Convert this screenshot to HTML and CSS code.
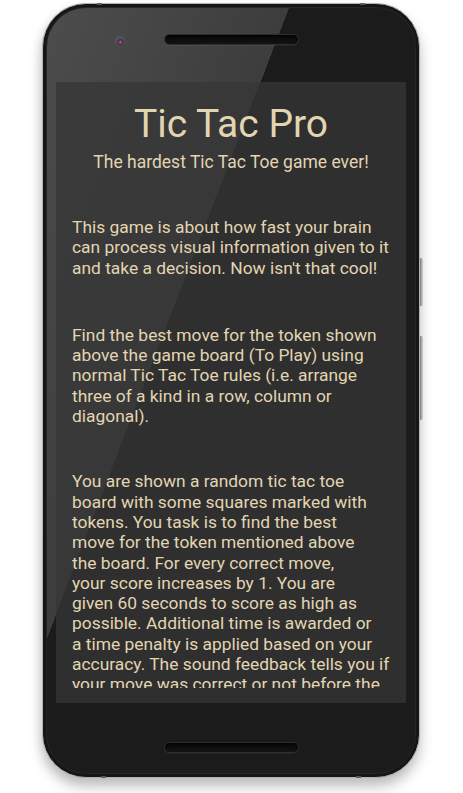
FILE: index.html
```html
<!DOCTYPE html>
<html lang="en">
<head>
<meta charset="utf-8">
<title>Tic Tac Pro</title>
<link rel="stylesheet" href="styles.css">
</head>
<body>
<div class="phone">
  <span class="btn btn-power"></span>
  <span class="btn btn-volume"></span>
  <span class="notch notch-tl"></span>
  <span class="notch notch-tr"></span>
  <span class="notch notch-bl"></span>
  <span class="notch notch-br"></span>
  <div class="bezel-top">
    <span class="camera"></span>
    <span class="speaker"></span>
    <span></span>
  </div>
  <div class="screen">
    <div class="content">
      <h1 class="title">Tic Tac Pro</h1>
      <p class="subtitle">The hardest Tic Tac Toe game ever!</p>
      <p class="para p1">This game is about how fast your brain<br>can process visual information given to it<br>and take a decision. Now isn't that cool!</p>
      <p class="para p2">Find the best move for the token shown<br>above the game board (To Play) using<br>normal Tic Tac Toe rules (i.e. arrange<br>three of a kind in a row, column or<br>diagonal).</p>
      <p class="para p3">You are shown a random tic tac toe<br>board with some squares marked with<br>tokens. You task is to find the best<br>move for the token mentioned above<br>the board. For every correct move,<br>your score increases by 1. You are<br>given 60 seconds to score as high as<br>possible. Additional time is awarded or<br>a time penalty is applied based on your<br>accuracy. The sound feedback tells you if<br>your move was correct or not before the<br>next board is shown.</p>
    </div>
  </div>
  <div class="bezel-bottom">
    <span class="speaker"></span>
  </div>
</div>
</body>
</html>
```
FILE: styles.css
```css
html, body {
  margin: 0;
  padding: 0;
  background: #ffffff;
}

body {
  width: 463px;
  height: 793px;
  overflow: hidden;
  padding-top: 3px;
  box-sizing: border-box;
  font-family: Roboto, "Noto Sans", Arial, sans-serif;
}

.phone {
  position: relative;
  box-sizing: border-box;
  width: 378px;
  height: 775px;
  margin-left: 42px;
  border: 1px solid #b4b4b4;
  border-radius: 44px;
  background:
    linear-gradient(111deg, rgba(255,255,255,0.22) 0%, rgba(255,255,255,0.15) 36.8%, rgba(255,255,255,0) 36.8%),
    #1b1b1b;
  box-shadow:
    inset 0 0 0 3px #161616,
    inset 0 0 0 4px #262626,
    0 9px 14px rgba(0,0,0,0.22),
    -2px 4px 10px rgba(0,0,0,0.08);
  display: flex;
  flex-direction: column;
}

.btn {
  position: absolute;
  right: -4px;
  width: 3px;
  background: linear-gradient(90deg, #7a7a7a, #d6d6d6);
  border-radius: 0 2px 2px 0;
}
.btn-power { top: 254px; height: 48px; }
.btn-volume { top: 332px; height: 84px; }

.notch {
  position: absolute;
  width: 5px;
  height: 2px;
  background: #5a5a5a;
}
.notch-tl { top: -1px; left: 54px; }
.notch-tr { top: -1px; right: 54px; }
.notch-bl { bottom: -1px; left: 58px; }
.notch-br { bottom: -1px; right: 58px; }

.bezel-top {
  box-sizing: border-box;
  height: 78px;
  padding-top: 30px;
  display: grid;
  grid-template-columns: 1fr auto 1fr;
  align-items: start;
}

.camera {
  justify-self: end;
  margin-right: 39px;
  margin-top: 2px;
  width: 10px;
  height: 10px;
  border-radius: 50%;
  background: radial-gradient(circle at 55% 62%, #d2506e 0, #a04060 1px, #38364a 2.5px, #4e4c60 4px, #56565e 5px);
}

.speaker {
  display: block;
  box-sizing: border-box;
  width: 135px;
  height: 11px;
  border-radius: 6px;
  border: 1px solid #2e2e2e;
  background: linear-gradient(#060606, #141414);
  box-shadow: inset 0 1px 2px rgba(0,0,0,0.9), 0 1px 0 rgba(255,255,255,0.05);
}

.screen {
  box-sizing: border-box;
  height: 621px;
  margin: 0 13px;
  padding: 20px 16px 15px 16px;
  background:
    linear-gradient(111deg, rgba(255,255,255,0.055) 0%, rgba(255,255,255,0.045) 34.7%, rgba(255,255,255,0) 34.7%),
    #2f2f2f;
  display: flex;
  flex-direction: column;
}

.content {
  flex: 1;
  overflow: hidden;
  color: #e2d5b2;
}

.title {
  margin: 0;
  font-size: 39px;
  line-height: 45px;
  font-weight: 400;
  text-align: center;
}

.subtitle {
  margin: 4.5px 0 0 0;
  font-size: 17.5px;
  line-height: 21px;
  text-align: center;
}

.para {
  margin: 0;
  font-size: 17.4px;
  line-height: 20.3px;
  white-space: nowrap;
}
.p1 { margin-top: 44.5px; }
.p2 { margin-top: 47px; }
.p3 { margin-top: 45px; }

.bezel-bottom {
  flex: 1;
  box-sizing: border-box;
  padding-top: 39px;
  display: flex;
  justify-content: center;
  align-items: flex-start;
}
```
